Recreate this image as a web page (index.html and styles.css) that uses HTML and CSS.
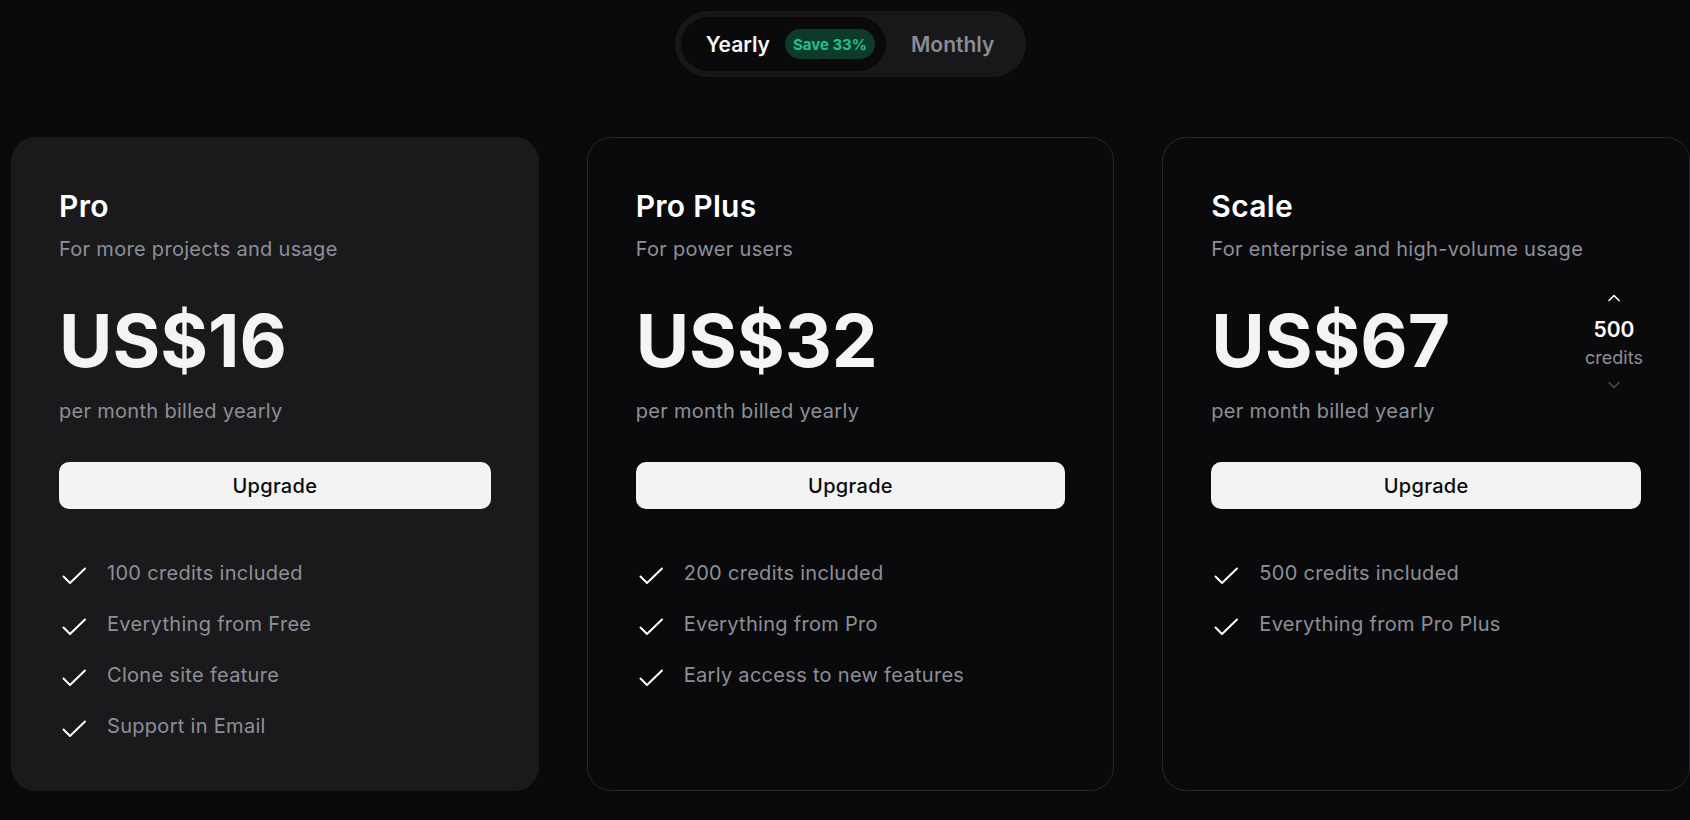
FILE: index.html
```html
<!DOCTYPE html>
<html lang="en">
<head>
<meta charset="utf-8">
<title>Pricing</title>
<link rel="stylesheet" href="styles.css">
</head>
<body>
<main class="page">
  <div class="toggle-wrap">
    <div class="toggle">
      <button class="toggle-opt active">Yearly <span class="badge">Save 33%</span></button>
      <button class="toggle-opt">Monthly</button>
    </div>
  </div>

  <section class="plans">
    <article class="card card-featured">
      <h2 class="plan-name">Pro</h2>
      <p class="plan-desc">For more projects and usage</p>
      <div class="price-row">
        <div class="price">US$16</div>
      </div>
      <p class="billing">per month billed yearly</p>
      <button class="upgrade">Upgrade</button>
      <ul class="features">
        <li><svg class="check" viewBox="0 0 28 18" width="28" height="18"><path d="M4.5 9.5 L11 16 L26 1.5"/></svg>100 credits included</li>
        <li><svg class="check" viewBox="0 0 28 18" width="28" height="18"><path d="M4.5 9.5 L11 16 L26 1.5"/></svg>Everything from Free</li>
        <li><svg class="check" viewBox="0 0 28 18" width="28" height="18"><path d="M4.5 9.5 L11 16 L26 1.5"/></svg>Clone site feature</li>
        <li><svg class="check" viewBox="0 0 28 18" width="28" height="18"><path d="M4.5 9.5 L11 16 L26 1.5"/></svg>Support in Email</li>
      </ul>
    </article>

    <article class="card">
      <h2 class="plan-name">Pro Plus</h2>
      <p class="plan-desc">For power users</p>
      <div class="price-row">
        <div class="price">US$32</div>
      </div>
      <p class="billing">per month billed yearly</p>
      <button class="upgrade">Upgrade</button>
      <ul class="features">
        <li><svg class="check" viewBox="0 0 28 18" width="28" height="18"><path d="M4.5 9.5 L11 16 L26 1.5"/></svg>200 credits included</li>
        <li><svg class="check" viewBox="0 0 28 18" width="28" height="18"><path d="M4.5 9.5 L11 16 L26 1.5"/></svg>Everything from Pro</li>
        <li><svg class="check" viewBox="0 0 28 18" width="28" height="18"><path d="M4.5 9.5 L11 16 L26 1.5"/></svg>Early access to new features</li>
      </ul>
    </article>

    <article class="card">
      <h2 class="plan-name">Scale</h2>
      <p class="plan-desc">For enterprise and high-volume usage</p>
      <div class="price-row">
        <div class="price">US$67</div>
        <div class="stepper">
          <svg class="chev chev-up" viewBox="0 0 14 9" width="14" height="9"><path d="M2 7.5 L7 2.5 L12 7.5"/></svg>
          <span class="step-value">500</span>
          <span class="step-unit">credits</span>
          <svg class="chev chev-down" viewBox="0 0 14 9" width="14" height="9"><path d="M2 1.5 L7 6.5 L12 1.5"/></svg>
        </div>
      </div>
      <p class="billing">per month billed yearly</p>
      <button class="upgrade">Upgrade</button>
      <ul class="features">
        <li><svg class="check" viewBox="0 0 28 18" width="28" height="18"><path d="M4.5 9.5 L11 16 L26 1.5"/></svg>500 credits included</li>
        <li><svg class="check" viewBox="0 0 28 18" width="28" height="18"><path d="M4.5 9.5 L11 16 L26 1.5"/></svg>Everything from Pro Plus</li>
      </ul>
    </article>
  </section>
</main>
</body>
</html>
```
FILE: styles.css
```css
* { box-sizing: border-box; }

html, body {
  margin: 0;
  padding: 0;
  background: #0a0a0c;
  color: #f4f4f5;
  font-family: Inter, "Noto Sans", sans-serif;
  overflow: hidden;
}

.page {
  margin-left: 11px;
  width: 1679px;
  padding-top: 11px;
}

.toggle-wrap {
  display: flex;
  justify-content: center;
}

.toggle {
  display: flex;
  align-items: center;
  height: 66px;
  padding: 6px;
  border-radius: 33px;
  background: #18181b;
}

.toggle-opt {
  display: flex;
  align-items: center;
  height: 54px;
  border: 0;
  background: transparent;
  font-family: Inter, sans-serif;
  font-size: 21px;
  font-weight: 600;
  color: #8b8b93;
  padding: 0 26px 0 25px;
  border-radius: 27px;
}

.toggle-opt.active {
  background: #0a0a0c;
  color: #f6f6f7;
  padding: 0 11px 0 25px;
}

.badge {
  display: inline-flex;
  align-items: center;
  justify-content: center;
  margin-left: 15px;
  width: 90px;
  height: 30px;
  border-radius: 15px;
  background: #0c3b2b;
  color: #1fc18b;
  font-size: 15px;
  font-weight: 700;
}

.plans {
  display: grid;
  grid-template-columns: repeat(3, 1fr);
  gap: 48px;
  margin-top: 60px;
}

.card {
  height: 654px;
  border-radius: 24px;
  border: 1px solid #28282c;
  padding: 48px;
  background: #0a0a0c;
}

.card-featured {
  background: #1a1a1c;
  border-color: #1a1a1c;
  padding: 48px 47px 47px;
}

.plan-name {
  margin: 0;
  font-size: 30px;
  line-height: 40px;
  font-weight: 600;
  letter-spacing: 0.3px;
  color: #ffffff;
}

.plan-desc {
  margin: 9px 0 0;
  font-size: 20px;
  line-height: 28px;
  letter-spacing: 0.3px;
  color: #8e8f98;
}

.price-row {
  display: flex;
  align-items: center;
  justify-content: space-between;
  height: 96px;
  margin-top: 30px;
}

.price {
  font-family: Inter, "Liberation Sans", sans-serif;
  font-weight: 700;
  font-size: 73px;
  line-height: 96px;
  color: #f4f4f5;
}

.stepper {
  align-self: flex-start;
  display: flex;
  flex-direction: column;
  align-items: center;
  width: 58px;
  margin-right: -2px;
}

.chev {
  display: block;
  fill: none;
  stroke-width: 1.6;
  stroke-linecap: round;
  stroke-linejoin: round;
}

.chev-up { stroke: #ffffff; }
.chev-down { stroke: #4d4e55; margin-top: 12px; }

.step-value {
  margin-top: 15px;
  font-size: 21px;
  line-height: 26px;
  font-weight: 600;
  color: #ffffff;
}

.step-unit {
  margin-top: 4px;
  font-size: 18px;
  line-height: 22px;
  color: #8e8f98;
}

.billing {
  margin: 8px 0 0;
  font-size: 20px;
  line-height: 28px;
  letter-spacing: 0.3px;
  color: #8e8f98;
}

.upgrade {
  display: block;
  width: 100%;
  height: 47px;
  margin-top: 37px;
  border: 0;
  border-radius: 10px;
  background: #f3f3f3;
  color: #0a0a0c;
  font-family: Inter, sans-serif;
  font-size: 20px;
  font-weight: 500;
  letter-spacing: 0.3px;
}

.features {
  list-style: none;
  margin: 50px 0 0;
  padding: 0;
  display: flex;
  flex-direction: column;
  gap: 23px;
}

.features li {
  display: flex;
  align-items: center;
  height: 28px;
  font-size: 20px;
  letter-spacing: 0.3px;
  color: #8e8f98;
}

.check {
  flex: none;
  margin-right: 20px;
  margin-top: 5px;
  fill: none;
  stroke: #ffffff;
  stroke-width: 2;
  stroke-linecap: round;
  stroke-linejoin: round;
}
```
